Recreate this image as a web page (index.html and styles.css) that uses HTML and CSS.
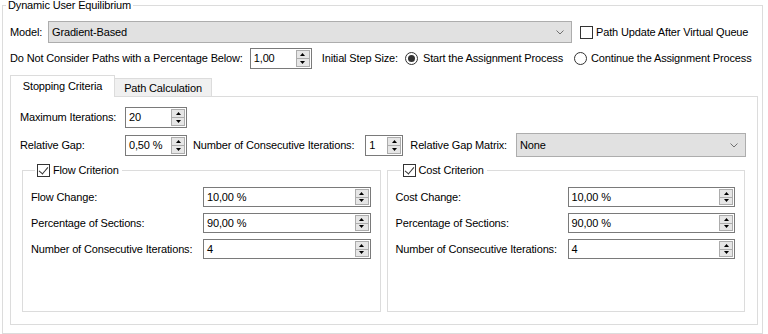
FILE: index.html
```html
<!DOCTYPE html>
<html>
<head>
<meta charset="utf-8">
<link rel="stylesheet" href="styles.css">
</head>
<body>
<fieldset class="outer">
  <legend class="outer-title">Dynamic User Equilibrium</legend>
  <div class="outer-body">
    <div class="row row-model">
      <span class="lbl lbl-model">Model:</span>
      <div class="combo combo-model"><span>Gradient-Based</span><svg class="chev" width="8" height="5" viewBox="0 0 8 5"><path d="M0.5 0.5 L4 4 L7.5 0.5" fill="none" stroke="#707070" stroke-width="1"/></svg></div>
      <span class="check ml-check"></span>
      <span class="lbl lbl-after-check">Path Update After Virtual Queue</span>
    </div>
    <div class="row row-paths">
      <span class="lbl">Do Not Consider Paths with a Percentage Below:</span>
      <div class="spin spin-paths"><span class="val">1,00</span><span class="spin-btns"><span class="sb up"><svg width="5" height="3" viewBox="0 0 5 3"><path d="M2.5 0 L5 3 L0 3Z" fill="#000"/></svg></span><span class="sb down"><svg width="5" height="3" viewBox="0 0 5 3"><path d="M0 0 L5 0 L2.5 3Z" fill="#000"/></svg></span></span></div>
      <span class="lbl lbl-step">Initial Step Size:</span>
      <span class="radio on ml-radio1"></span>
      <span class="lbl lbl-radio">Start the Assignment Process</span>
      <span class="radio ml-radio2"></span>
      <span class="lbl lbl-radio2">Continue the Assignment Process</span>
    </div>
    <div class="tabs">
      <div class="tabbar">
        <div class="tab active">Stopping Criteria</div>
        <div class="tab">Path Calculation</div>
      </div>
      <div class="panel">
        <div class="row row-maxit">
          <span class="lbl lbl-col">Maximum Iterations:</span>
          <div class="spin spin-short"><span class="val">20</span><span class="spin-btns"><span class="sb up"><svg width="5" height="3" viewBox="0 0 5 3"><path d="M2.5 0 L5 3 L0 3Z" fill="#000"/></svg></span><span class="sb down"><svg width="5" height="3" viewBox="0 0 5 3"><path d="M0 0 L5 0 L2.5 3Z" fill="#000"/></svg></span></span></div>
        </div>
        <div class="row row-gap">
          <span class="lbl lbl-col">Relative Gap:</span>
          <div class="spin spin-short"><span class="val">0,50 %</span><span class="spin-btns"><span class="sb up"><svg width="5" height="3" viewBox="0 0 5 3"><path d="M2.5 0 L5 3 L0 3Z" fill="#000"/></svg></span><span class="sb down"><svg width="5" height="3" viewBox="0 0 5 3"><path d="M0 0 L5 0 L2.5 3Z" fill="#000"/></svg></span></span></div>
          <span class="lbl lbl-consec">Number of Consecutive Iterations:</span>
          <div class="spin spin-tiny"><span class="val">1</span><span class="spin-btns"><span class="sb up"><svg width="5" height="3" viewBox="0 0 5 3"><path d="M2.5 0 L5 3 L0 3Z" fill="#000"/></svg></span><span class="sb down"><svg width="5" height="3" viewBox="0 0 5 3"><path d="M0 0 L5 0 L2.5 3Z" fill="#000"/></svg></span></span></div>
          <span class="lbl lbl-matrix">Relative Gap Matrix:</span>
          <div class="combo combo-matrix"><span>None</span><svg class="chev" width="8" height="5" viewBox="0 0 8 5"><path d="M0.5 0.5 L4 4 L7.5 0.5" fill="none" stroke="#707070" stroke-width="1"/></svg></div>
        </div>
        <div class="groups">
          <fieldset class="group">
            <legend class="group-title"><span class="check"></span><span class="lbl">Flow Criterion</span></legend>
            <div class="grid">
              <span class="lbl">Flow Change:</span>
              <div class="spin spin-wide"><span class="val">10,00 %</span><span class="spin-btns"><span class="sb up"><svg width="5" height="3" viewBox="0 0 5 3"><path d="M2.5 0 L5 3 L0 3Z" fill="#000"/></svg></span><span class="sb down"><svg width="5" height="3" viewBox="0 0 5 3"><path d="M0 0 L5 0 L2.5 3Z" fill="#000"/></svg></span></span></div>
              <span class="lbl">Percentage of Sections:</span>
              <div class="spin spin-wide"><span class="val">90,00 %</span><span class="spin-btns"><span class="sb up"><svg width="5" height="3" viewBox="0 0 5 3"><path d="M2.5 0 L5 3 L0 3Z" fill="#000"/></svg></span><span class="sb down"><svg width="5" height="3" viewBox="0 0 5 3"><path d="M0 0 L5 0 L2.5 3Z" fill="#000"/></svg></span></span></div>
              <span class="lbl">Number of Consecutive Iterations:</span>
              <div class="spin spin-wide"><span class="val">4</span><span class="spin-btns"><span class="sb up"><svg width="5" height="3" viewBox="0 0 5 3"><path d="M2.5 0 L5 3 L0 3Z" fill="#000"/></svg></span><span class="sb down"><svg width="5" height="3" viewBox="0 0 5 3"><path d="M0 0 L5 0 L2.5 3Z" fill="#000"/></svg></span></span></div>
            </div>
          </fieldset>
          <fieldset class="group group-cost">
            <legend class="group-title"><span class="check"></span><span class="lbl">Cost Criterion</span></legend>
            <div class="grid">
              <span class="lbl">Cost Change:</span>
              <div class="spin spin-wide"><span class="val">10,00 %</span><span class="spin-btns"><span class="sb up"><svg width="5" height="3" viewBox="0 0 5 3"><path d="M2.5 0 L5 3 L0 3Z" fill="#000"/></svg></span><span class="sb down"><svg width="5" height="3" viewBox="0 0 5 3"><path d="M0 0 L5 0 L2.5 3Z" fill="#000"/></svg></span></span></div>
              <span class="lbl">Percentage of Sections:</span>
              <div class="spin spin-wide"><span class="val">90,00 %</span><span class="spin-btns"><span class="sb up"><svg width="5" height="3" viewBox="0 0 5 3"><path d="M2.5 0 L5 3 L0 3Z" fill="#000"/></svg></span><span class="sb down"><svg width="5" height="3" viewBox="0 0 5 3"><path d="M0 0 L5 0 L2.5 3Z" fill="#000"/></svg></span></span></div>
              <span class="lbl">Number of Consecutive Iterations:</span>
              <div class="spin spin-wide"><span class="val">4</span><span class="spin-btns"><span class="sb up"><svg width="5" height="3" viewBox="0 0 5 3"><path d="M2.5 0 L5 3 L0 3Z" fill="#000"/></svg></span><span class="sb down"><svg width="5" height="3" viewBox="0 0 5 3"><path d="M0 0 L5 0 L2.5 3Z" fill="#000"/></svg></span></span></div>
            </div>
          </fieldset>
        </div>
      </div>
    </div>
  </div>
</fieldset>
</body>
</html>
```
FILE: styles.css
```css
* { box-sizing: border-box; }
html, body { margin: 0; padding: 0; background: #fff; }
body {
  font-family: "Liberation Sans", Arial, sans-serif;
  font-size: 11px;
  letter-spacing: -0.15px;
  color: #000;
  width: 768px;
  height: 334px;
  overflow: hidden;
}
.lbl { white-space: nowrap; line-height: 13px; }

.outer {
  margin: 0 0 0 2px;
  padding: 0;
  width: 761px;
  height: 334px;
  border: 1px solid #dcdcdc;
  min-width: 0;
}
.outer-title {
  margin-left: 3px;
  padding: 0 2px;
  line-height: 11px;
  font-size: 11px;
}
.outer-body { padding: 10px 0 0 7px; }

.row { display: flex; align-items: center; }
.row-model { height: 22px; }
.lbl-model { width: 38px; }

.combo {
  display: flex;
  align-items: center;
  justify-content: space-between;
  background: #e1e1e1;
  border: 1px solid #adadad;
  padding: 0 7px 0 3px;
}
.combo-model { width: 524px; height: 22px; }
.combo-matrix { width: 230px; height: 24px; margin-left: auto; }
.chev { display: block; }

.check {
  display: inline-block;
  width: 13px;
  height: 13px;
  border: 1px solid #333;
  background: #fff;
  flex: none;
  position: relative;
}
.group-title .check::after {
  content: "";
  position: absolute;
  left: 3px;
  top: 0px;
  width: 4px;
  height: 8px;
  border-right: 1px solid #333;
  border-bottom: 1px solid #333;
  transform: rotate(40deg);
}
.ml-check { margin-left: 8px; }
.lbl-after-check { margin-left: 3px; }

.row-paths { margin-top: 5px; height: 21px; }
.spin {
  display: flex;
  align-items: stretch;
  justify-content: space-between;
  background: #fff;
  border: 1px solid #7a7a7a;
  height: 21px;
  padding: 1px 1px 1px 3px;
  flex: none;
}
.spin .val { align-self: center; line-height: 13px; }
.spin-btns {
  display: flex;
  flex-direction: column;
  width: 14px;
  border: 1px solid #acacac;
  background: #e6e6e6;
}
.sb {
  flex: 1;
  display: flex;
  align-items: center;
  justify-content: center;
}
.sb svg { display: block; }
.sb.up { border-bottom: 1px solid #acacac; }
.spin-paths { width: 62px; margin-left: 7px; }
.lbl-step { margin-left: 10px; }

.radio {
  display: inline-block;
  width: 13px;
  height: 13px;
  border: 1px solid #333;
  border-radius: 50%;
  background: #fff;
  flex: none;
  position: relative;
}
.radio.on::after {
  content: "";
  position: absolute;
  left: 2px;
  top: 2px;
  width: 7px;
  height: 7px;
  border-radius: 50%;
  background: #333;
}
.ml-radio1 { margin-left: 7px; }
.lbl-radio { margin-left: 5px; }
.ml-radio2 { margin-left: 11px; }
.lbl-radio2 { margin-left: 4px; }

.tabs { margin-top: 6px; width: 748px; }
.tabbar { display: flex; align-items: flex-end; height: 21px; }
.tab {
  border: 1px solid #dcdcdc;
  border-bottom: none;
  background: #f0f0f0;
  height: 18px;
  display: flex;
  align-items: center;
  justify-content: center;
  white-space: nowrap;
  width: 97px;
  border-left: none;
}
.tab.active {
  background: #fff;
  height: 22px;
  width: 105px;
  margin-bottom: -1px;
  position: relative;
  z-index: 1;
  border-left: 1px solid #dcdcdc;
  padding-bottom: 2px;
}
.panel {
  border: 1px solid #dcdcdc;
  background: #fff;
  height: 229px;
  padding: 10px 11px 11px 9px;
}
.row-maxit { height: 21px; }
.lbl-col { width: 105px; }
.spin-short { width: 62px; }
.spin-tiny { width: 38px; margin-left: 11px; }
.row-gap { margin-top: 5px; height: 24px; }
.row-gap .spin { height: 21px; }
.lbl-consec { margin-left: 6px; }
.lbl-matrix { margin-left: 7px; }

.groups {
  display: flex;
  gap: 6px;
  margin: 7px 1px 0 2px;
  height: 148px;
}
.group {
  flex: 1;
  margin: 0;
  border: 1px solid #dcdcdc;
  padding: 10px 9px 0 8px;
  min-width: 0;
}
.group-title {
  margin-left: 4px;
  padding: 0 3px 0 2px;
  display: flex;
  align-items: center;
  height: 13px;
}
.group-cost .group-title { margin-left: 5px; }
.group-title .lbl { margin-left: 3px; }
.grid {
  display: grid;
  grid-template-columns: 172px 1fr;
  row-gap: 6px;
  align-items: center;
}
.spin-wide { height: 20px; }
```
